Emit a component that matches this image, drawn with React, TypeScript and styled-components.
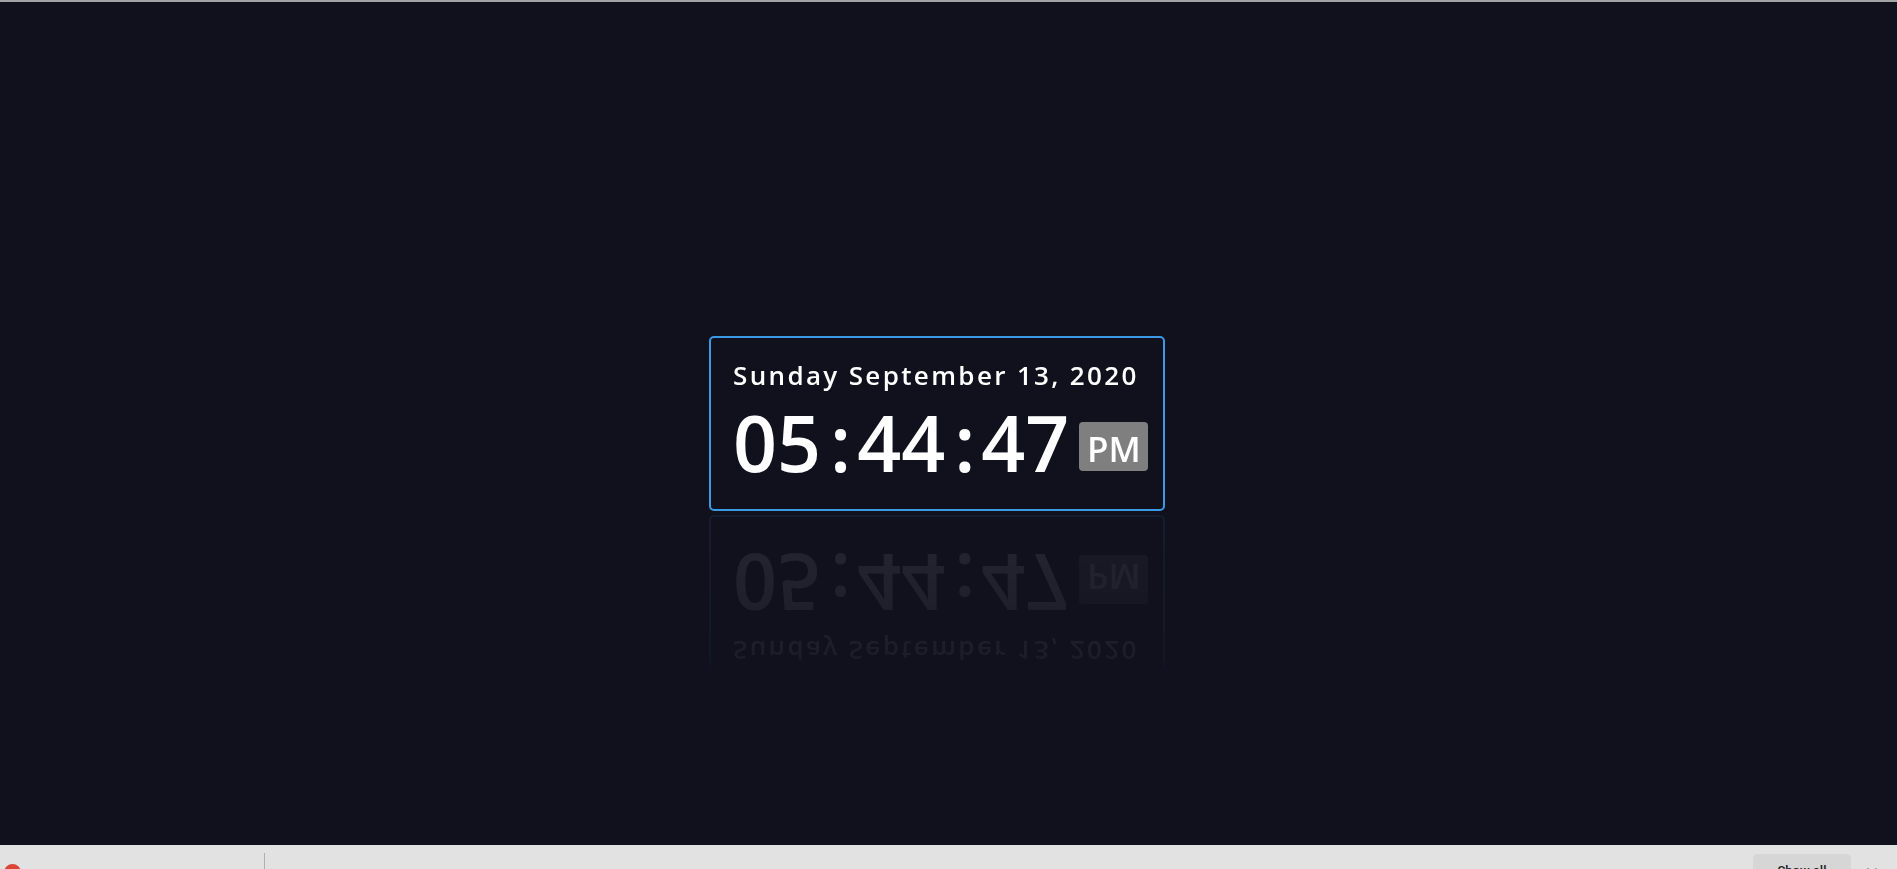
import React from "react";
import styled, { createGlobalStyle } from "styled-components";
import { X } from "lucide-react";

const Global = createGlobalStyle`
  html, body { margin: 0; padding: 0; background: #11111e; }
  body { font-family: "Open Sans", "Noto Sans", sans-serif; }
  * { box-sizing: border-box; }
`;

const Page = styled.div`
  height: 869px;
  display: flex;
  flex-direction: column;
  overflow: hidden;
`;

const TopEdge = styled.div`
  height: 2px;
  flex: none;
  background: #a3a3a3;
`;

const Stage = styled.main`
  flex: 1;
  display: flex;
  align-items: center;
  justify-content: center;
  padding-right: 23px;
  background: #11111e;
`;

const Card = styled.section`
  width: 456px;
  height: 175px;
  border: 2px solid #3a9ae6;
  border-radius: 5px;
  padding: 24px 0 0 22px;
  display: flex;
  flex-direction: column;
  gap: 16px;
  -webkit-box-reflect: below 4px
    linear-gradient(to bottom, transparent 9%, rgba(0, 0, 0, 0.05) 20%, rgba(0, 0, 0, 0.09));
`;

const DateLine = styled.div`
  color: #ffffff;
  font-size: 26px;
  line-height: 26px;
  font-weight: 600;
  letter-spacing: 2.35px;
  white-space: nowrap;
`;

const TimeRow = styled.div`
  display: flex;
  align-items: center;
  gap: 10px;
`;

const Digits = styled.div`
  flex: none;
  color: #ffffff;
  font-size: 77px;
  line-height: 77px;
  font-weight: 600;
  letter-spacing: 0;
  white-space: nowrap;
`;

const Colon = styled.span`
  display: inline-block;
  margin: 0 6px 0 9px;
`;

const Meridiem = styled.div`
  flex: none;
  margin-top: 7px;
  background: #7f7f7f;
  color: #ffffff;
  border-radius: 4px;
  width: 69px;
  height: 49px;
  display: flex;
  align-items: center;
  justify-content: center;
  font-size: 35px;
  font-weight: 600;
  line-height: 1;
  padding-top: 4px;
`;

const Shelf = styled.footer`
  height: 24px;
  flex: none;
  background: #e2e2e2;
  overflow: hidden;
`;

const ShelfInner = styled.div`
  height: 49px;
  display: flex;
  align-items: flex-start;
  font-family: Roboto, "Liberation Sans", sans-serif;
  font-size: 13px;
  color: #202124;
`;

const DownloadItem = styled.div`
  width: 264px;
  height: 49px;
  padding: 19px 0 0 4px;
  display: flex;
  align-items: flex-start;
  gap: 10px;
`;

const FileIcon = styled.span`
  width: 17px;
  height: 17px;
  border-radius: 50%;
  background: #db4437;
  flex: none;
`;

const Separator = styled.div`
  width: 1px;
  height: 33px;
  margin-top: 8px;
  background: #b0b0b0;
  flex: none;
`;

const Spacer = styled.div`
  flex: 1;
`;

const ShowAll = styled.button`
  margin-top: 9px;
  width: 98px;
  height: 32px;
  border: none;
  border-radius: 5px;
  background: #d6d6d6;
  font-family: Roboto, "Liberation Sans", sans-serif;
  font-size: 13px;
  font-weight: 500;
  color: #202124;
  padding: 0;
`;

const CloseBtn = styled.div`
  margin: 20px 17px 0 13px;
  color: #3c3c3c;
  display: flex;
`;

export default function App() {
  return (
    <>
      <Global />
      <Page>
        <TopEdge />
        <Stage>
          <Card>
            <DateLine>Sunday September 13, 2020</DateLine>
            <TimeRow>
              <Digits>
                05<Colon>:</Colon>44<Colon>:</Colon>47
              </Digits>
              <Meridiem>PM</Meridiem>
            </TimeRow>
          </Card>
        </Stage>
        <Shelf>
          <ShelfInner>
            <DownloadItem>
              <FileIcon />
            </DownloadItem>
            <Separator />
            <Spacer />
            <ShowAll>Show all</ShowAll>
            <CloseBtn>
              <X size={16} strokeWidth={2} />
            </CloseBtn>
          </ShelfInner>
        </Shelf>
      </Page>
    </>
  );
}
